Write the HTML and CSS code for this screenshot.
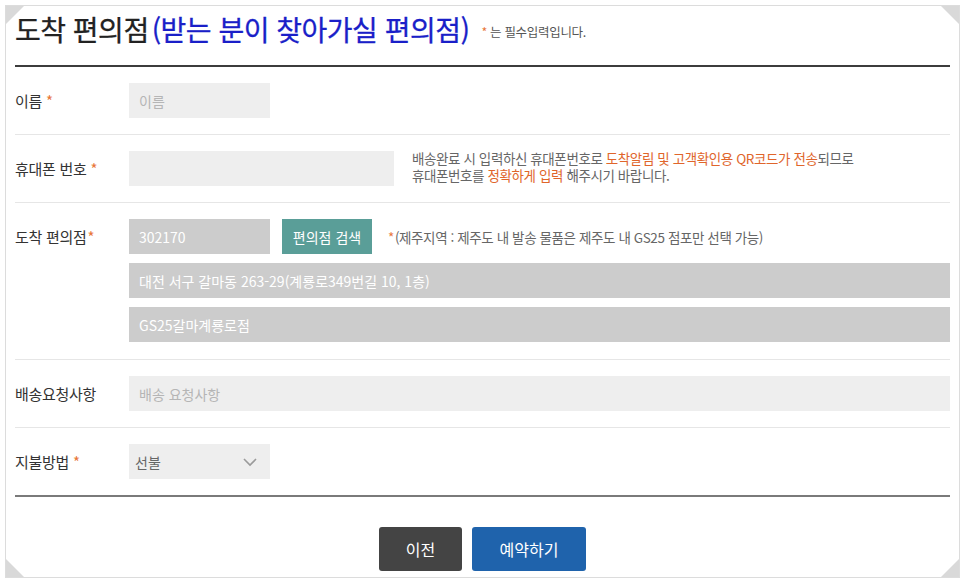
FILE: index.html
```html
<!DOCTYPE html>
<html lang="ko">
<head>
    <meta charset="utf-8">
    <link rel="stylesheet" href="styles.css">
</head>
<body>
    <div class="frame">
        <span class="corner tl"></span>
        <span class="corner tr"></span>
        <span class="corner bl"></span>
        <span class="corner br"></span>

        <div class="head">
            <h2 class="title">도착 편의점<span class="blue">(받는 분이 찾아가실 편의점)</span></h2>
            <span class="req-note"><i class="star">*</i>는 필수입력입니다.</span>
        </div>

        <div class="row">
            <label class="lbl">이름<i class="star">*</i></label>
            <div class="field">
                <input class="inp short" type="text" placeholder="이름">
            </div>
        </div>

        <div class="row mid">
            <label class="lbl">휴대폰 번호<i class="star">*</i></label>
            <div class="field line">
                <input class="inp phone" type="text">
                <p class="help">배송완료 시 입력하신 휴대폰번호로 <em>도착알림 및 고객확인용 QR코드가 전송</em>되므로<br>휴대폰번호를 <em>정확하게 입력</em> 해주시기 바랍니다.</p>
            </div>
        </div>

        <div class="row tall">
            <label class="lbl">도착 편의점<i class="star tight">*</i></label>
            <div class="field stack">
                <div class="line">
                    <input class="inp short dim" type="text" value="302170" readonly>
                    <button class="btn-search" type="button">편의점 검색</button>
                    <span class="note"><i class="star">*</i>(제주지역 : 제주도 내 발송 물품은 제주도 내 GS25 점포만 선택 가능)</span>
                </div>
                <input class="inp full dim" type="text" value="대전 서구 갈마동 263-29(계룡로349번길 10, 1층)" readonly>
                <input class="inp full dim" type="text" value="GS25갈마계룡로점" readonly>
            </div>
        </div>

        <div class="row">
            <label class="lbl">배송요청사항</label>
            <div class="field">
                <input class="inp full" type="text" placeholder="배송 요청사항">
            </div>
        </div>

        <div class="row last">
            <label class="lbl">지불방법<i class="star">*</i></label>
            <div class="field">
                <div class="select">
                    <span>선불</span>
                    <svg width="16" height="10" viewBox="0 0 16 10"><polyline points="2,2 8,8 14,2" fill="none" stroke="#9a9a9a" stroke-width="1.6"/></svg>
                </div>
            </div>
        </div>

        <div class="actions">
            <button class="btn prev" type="button">이전</button>
            <button class="btn submit" type="button">예약하기</button>
        </div>
    </div>
</body>
</html>
```

FILE: styles.css
```css
* {
    box-sizing: border-box;
}
body {
    margin: 0;
    background: #fff;
    font-family: "Noto Sans CJK KR", "Noto Sans", sans-serif;
    color: #333;
}
.frame {
    position: relative;
    margin: 5px 6px 5px 5px;
    height: 573px;
    border: 1px solid #dcdcdc;
    padding: 0 9px;
}
.corner {
    position: absolute;
    width: 0;
    height: 0;
    border: 9px solid transparent;
}
.corner.tl { top: 0; left: 0; border-top-color: #d9d9d9; border-left-color: #d9d9d9; }
.corner.tr { top: 0; right: 0; border-top-color: #d9d9d9; border-right-color: #d9d9d9; }
.corner.bl { bottom: 0; left: 0; border-bottom-color: #d9d9d9; border-left-color: #d9d9d9; }
.corner.br { bottom: 0; right: 0; border-bottom-color: #d9d9d9; border-right-color: #d9d9d9; }

.head {
    display: flex;
    align-items: center;
    height: 61px;
    padding-bottom: 13px;
    border-bottom: 2px solid #3c3c3c;
}
.title {
    margin: 0;
    font-size: 28px;
    font-weight: 400;
    letter-spacing: -0.5px;
    color: #222;
    line-height: 34px;
    -webkit-text-stroke: 0.3px currentColor;
}
.title .blue {
    color: #1a1fc8;
    margin-left: 3px;
}
.req-note {
    margin-left: 8px;
    margin-top: 4px;
    font-size: 12.5px;
    color: #555;
    letter-spacing: -0.3px;
}
.star {
    font-style: normal;
    color: #e8763a;
    margin-left: 4px;
    margin-right: 3px;
}
.star.tight {
    margin-left: 1px;
}

.row {
    display: flex;
    align-items: center;
    padding: 16px 0;
    border-bottom: 1px solid #e6e6e6;
}
.row.tall {
    padding-bottom: 17px;
}
.row.last {
    border-bottom: 2px solid #7a7a7a;
}
.lbl {
    width: 114px;
    flex: none;
    font-size: 15px;
    letter-spacing: -0.3px;
    color: #333;
    align-self: flex-start;
    line-height: 35px;
}
.field {
    flex: 1;
}
.field.line, .line {
    display: flex;
    align-items: center;
}
.field.stack {
    display: flex;
    flex-direction: column;
    gap: 9px;
}
.inp {
    display: block;
    height: 35px;
    border: 0;
    background: #eeeeee;
    padding: 0 10px;
    font-family: inherit;
    font-size: 14px;
    color: #333;
    outline: none;
}
.inp::placeholder {
    color: #b5b5b5;
}
.inp.short {
    width: 141px;
}
.inp.phone {
    width: 265px;
}
.inp.full {
    width: 100%;
}
.inp.dim {
    background: #cccccc;
    color: #fff;
}
.help {
    margin: -3px 0 0 18px;
    font-size: 13.5px;
    line-height: 17px;
    color: #666;
    letter-spacing: -0.4px;
}
.help em {
    font-style: normal;
    color: #e0652b;
}
.btn-search {
    height: 35px;
    width: 90px;
    margin-left: 12px;
    border: 0;
    background: #5a9e98;
    color: #fff;
    font-family: inherit;
    font-size: 14px;
}
.note {
    margin-left: 16px;
    font-size: 13.5px;
    color: #666;
    letter-spacing: -0.4px;
}
.note .star {
    margin: 0 1px 0 0;
}
.select {
    width: 141px;
    height: 35px;
    background: #eeeeee;
    display: flex;
    align-items: center;
    justify-content: space-between;
    padding: 0 12px 0 6px;
    font-size: 14px;
    color: #666;
}

.actions {
    display: flex;
    justify-content: center;
    gap: 10px;
    padding-top: 30px;
}
.btn {
    height: 44px;
    border: 0;
    border-radius: 3px;
    color: #fff;
    font-family: inherit;
    font-size: 16px;
}
.btn.prev {
    width: 83px;
    background: #444;
}
.btn.submit {
    width: 114px;
    background: #1f63ac;
}
```
